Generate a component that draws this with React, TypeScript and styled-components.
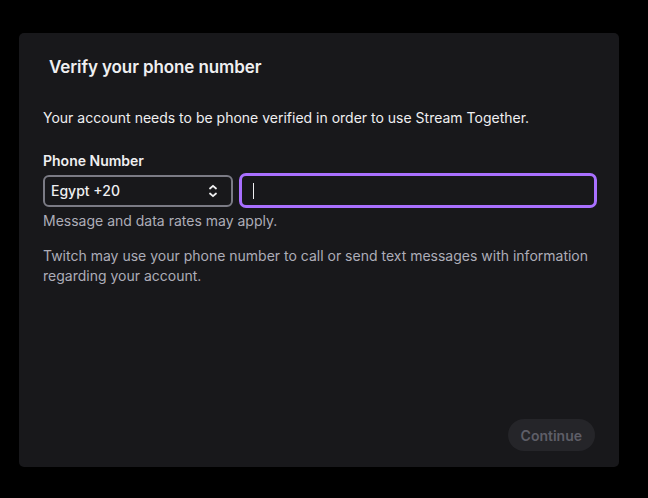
import React from "react";
import styled, { createGlobalStyle } from "styled-components";

const Global = createGlobalStyle`
  html, body { margin: 0; padding: 0; background: #000; }
  body { font-family: Inter, "Noto Sans", sans-serif; -webkit-font-smoothing: antialiased; }
  * { box-sizing: border-box; }
`;

const Page = styled.div`
  width: 648px;
  height: 498px;
  padding: 33px 0 0 19px;
`;

const Modal = styled.section`
  width: 600px;
  height: 434px;
  background: #18181b;
  border-radius: 5px;
  display: flex;
  flex-direction: column;
  padding: 22px 24px 16px 24px;
  color: #efeff1;
`;

const Title = styled.h2`
  margin: 0 0 0 6px;
  font-size: 17px;
  line-height: 24px;
  font-weight: 600;
  letter-spacing: -0.1px;
`;

const Body = styled.p<{ $top: number; $muted?: boolean }>`
  margin: ${(p) => p.$top}px 0 0 0;
  font-size: 14px;
  line-height: 20px;
  font-weight: 400;
  color: ${(p) => (p.$muted ? "#adadb8" : "#efeff1")};
`;

const Label = styled.label`
  margin-top: 23px;
  font-size: 14px;
  line-height: 20px;
  font-weight: 600;
`;

const Row = styled.div`
  margin: 2px -2px 0 0;
  display: flex;
  align-items: center;
  gap: 6px;
`;

const Select = styled.div`
  width: 190px;
  height: 32px;
  border: 2px solid #7b7b85;
  border-radius: 6px;
  display: flex;
  align-items: center;
  justify-content: space-between;
  padding: 0 13px 0 6px;
  font-size: 14px;
  font-weight: 500;
  color: #efeff1;
`;

const Field = styled.div`
  flex: 1;
  height: 35px;
  border: 3px solid #a970ff;
  border-radius: 7px;
  display: flex;
  align-items: center;
  padding: 0 11px;
`;

const Caret = styled.span`
  width: 1px;
  height: 16px;
  background: #efeff1;
  flex: none;
`;

const Input = styled.input`
  flex: 1;
  min-width: 0;
  background: transparent;
  border: none;
  outline: none;
  color: #efeff1;
  font: inherit;
  caret-color: transparent;
  padding: 0;
`;

const Footer = styled.div`
  margin-top: auto;
  display: flex;
  justify-content: flex-end;
`;

const Button = styled.button`
  height: 32px;
  padding: 0 13px;
  border: none;
  border-radius: 16px;
  background: #252529;
  color: #5e5e67;
  font-family: Inter, "Noto Sans", sans-serif;
  font-size: 14px;
  font-weight: 600;
`;

const Chevrons = () => (
  <svg width="10" height="14" viewBox="0 0 10 14" fill="none" stroke="#efeff1" strokeWidth="1.8" strokeLinecap="round" strokeLinejoin="round">
    <path d="M2 4.5 5 1.8 8 4.5" />
    <path d="M2 9.5 5 12.2 8 9.5" />
  </svg>
);

export default function App() {
  return (
    <>
      <Global />
      <Page>
        <Modal>
          <Title>Verify your phone number</Title>
          <Body $top={29}>Your account needs to be phone verified in order to use Stream Together.</Body>
          <Label>Phone Number</Label>
          <Row>
            <Select>
              <span>Egypt +20</span>
              <Chevrons />
            </Select>
            <Field>
              <Caret />
              <Input aria-label="Phone number" />
            </Field>
          </Row>
          <Body $top={3} $muted>Message and data rates may apply.</Body>
          <Body $top={15} $muted>
            Twitch may use your phone number to call or send text messages with information regarding your account.
          </Body>
          <Footer>
            <Button disabled>Continue</Button>
          </Footer>
        </Modal>
      </Page>
    </>
  );
}
